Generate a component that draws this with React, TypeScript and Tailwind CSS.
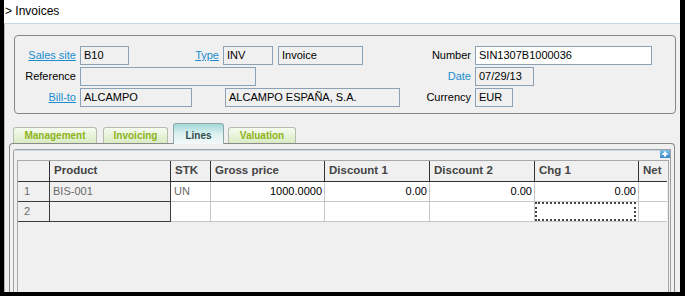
import React from "react";

const Input = ({ w, children, white }: { w: number; children?: React.ReactNode; white?: boolean }) => (
  <div
    className={`h-[19px] border border-[#8ba1b6] ${white ? "bg-white" : "bg-[#f0f0f0]"} pl-[3px] flex items-center text-[11px] text-black whitespace-nowrap overflow-hidden shrink-0`}
    style={{ width: w }}
  >
    {children}
  </div>
);

const Label = ({ w, children, kind }: { w: number; children: React.ReactNode; kind?: "link" | "blue" }) => (
  <div className="shrink-0 text-right pr-[4px] text-[11px] whitespace-nowrap" style={{ width: w }}>
    <span
      className={
        kind === "link"
          ? "text-[#1b8dcf] underline"
          : kind === "blue"
          ? "text-[#1b8dcf]"
          : "text-black"
      }
    >
      {children}
    </span>
  </div>
);

const cols = [32, 121, 40, 114, 105, 105, 104, 28];
const headers = ["", "Product", "STK", "Gross price", "Discount 1", "Discount 2", "Chg 1", "Net"];

function Cell({
  i,
  children,
  row,
}: {
  i: number;
  children?: React.ReactNode;
  row: number;
}) {
  const dark = i <= 1;
  const gray = i <= 1;
  const right = i >= 3;
  const focus = row === 2 && i === 6;
  return (
    <div
      className={`h-[20px] border-b border-r ${dark ? "border-[#3c3c3c]" : "border-[#c6c6c6]"} ${
        gray ? "bg-[#f0f0f0]" : "bg-white"
      } flex items-center text-[11px] ${i === 0 ? "justify-start pl-[6px] text-[#6a6a6a]" : right ? "justify-end pr-[2px] text-black" : "pl-[3px] text-[#6a6a6a]"} ${
        i === 7 ? "border-r-0" : ""
      }`}
      style={{ width: cols[i] }}
    >
      {focus ? <div className="w-full h-full border-2 border-dotted border-[#444]" /> : children}
    </div>
  );
}

export default function App() {
  const row1 = ["1", "BIS-001", "UN", "1000.0000", "0.00", "0.00", "0.00", ""];
  const row2 = ["2", "", "", "", "", "", "", ""];
  return (
    <div className="w-[685px] h-[296px] bg-black pl-[4px] pr-[5px] pb-[4px] flex flex-col font-['Liberation_Sans',Arial,sans-serif] text-[11px] text-black">
      <div className="h-[24px] shrink-0 bg-white border-b border-[#c9d5e1] flex items-center pl-[1px] pb-[2px] text-[12px]">
        &gt; Invoices
      </div>
      <div className="flex-1 min-h-0 bg-[#f0f0f0] flex flex-col border-l border-[#b4b4b4]">
        {/* Header group box */}
        <div className="mt-[11px] ml-[9px] mr-[4px] h-[79px] shrink-0 border border-[#858585] rounded-[4px] pt-[10px] flex flex-col gap-[2px]">
          <div className="flex items-center">
            <Label w={65} kind="link">Sales site</Label>
            <Input w={49}>B10</Input>
            <Label w={94} kind="link">Type</Label>
            <Input w={50}>INV</Input>
            <div className="w-[5px] shrink-0" />
            <Input w={85}>Invoice</Input>
            <Label w={112}>Number</Label>
            <Input w={177} white>SIN1307B1000036</Input>
          </div>
          <div className="flex items-center">
            <Label w={65}>Reference</Label>
            <Input w={176} />
            <Label w={219} kind="blue">Date</Label>
            <Input w={59}>07/29/13</Input>
          </div>
          <div className="flex items-center">
            <Label w={65} kind="link">Bill-to</Label>
            <Input w={112}>ALCAMPO</Input>
            <div className="w-[33px] shrink-0" />
            <Input w={175}>ALCAMPO ESPAÑA, S.A.</Input>
            <Label w={75}>Currency</Label>
            <Input w={38}>EUR</Input>
          </div>
        </div>

        {/* Tabs */}
        <div className="mt-[9px] ml-[8px] h-[20px] shrink-0 flex items-end relative z-10">
          <div className="w-[84px] h-[16px] border border-b-0 border-[#b3bcae] rounded-t-[3px] bg-gradient-to-b from-[#f6fbf0] to-[#d8ecc2] flex items-center justify-center text-[10px] font-bold text-[#8fb31c]">
            Management
          </div>
          <div className="w-[6px]" />
          <div className="w-[65px] h-[16px] border border-b-0 border-[#b3bcae] rounded-t-[3px] bg-gradient-to-b from-[#f6fbf0] to-[#d8ecc2] flex items-center justify-center text-[10px] font-bold text-[#8fb31c]">
            Invoicing
          </div>
          <div className="w-[5px]" />
          <div className="w-[51px] h-[21px] -mb-[1px] border border-b-0 border-[#8ea8a8] rounded-t-[3px] bg-gradient-to-b from-[#9fd8d6] via-[#dcf1f0] to-[#f4f9f9] flex items-center justify-center pt-[2px] text-[10px] font-bold text-[#2f4f4f]">
            Lines
          </div>
          <div className="w-[4px]" />
          <div className="w-[68px] h-[16px] border border-b-0 border-[#b3bcae] rounded-t-[3px] bg-gradient-to-b from-[#f6fbf0] to-[#d8ecc2] flex items-center justify-center text-[10px] font-bold text-[#8fb31c]">
            Valuation
          </div>
        </div>

        {/* Panel */}
        <div className="flex-1 min-h-0 ml-[4px] mr-[5px] border border-b-0 border-[#8a8a8a] rounded-t-[4px] pt-[5px] px-[3px] flex flex-col">
          <div className="flex-1 min-h-0 border border-b-0 border-[#a2a2a2] rounded-tl-[3px] flex flex-col">
            <div className="h-[10px] shrink-0 border-t border-[#c4d8e8] flex justify-end">
              <svg width="10" height="8" viewBox="0 0 10 8" className="-mt-[1px]">
                <defs>
                  <linearGradient id="pg" x1="0" y1="0" x2="0" y2="1">
                    <stop offset="0" stopColor="#7cc0ea" />
                    <stop offset="1" stopColor="#3d8cc8" />
                  </linearGradient>
                </defs>
                <rect x="0" y="0" width="10" height="8" fill="url(#pg)" />
                <rect x="4" y="1.5" width="2" height="5" fill="#fff" />
                <rect x="2.5" y="3" width="5" height="2" fill="#fff" />
              </svg>
            </div>
            <div className="flex-1 min-h-0 ml-[3px] mr-[1px] border-l border-r border-t border-[#a8a8a8] flex flex-col">
              <div className="flex h-[21px] shrink-0">
                {headers.map((h, i) => (
                  <div
                    key={i}
                    className={`h-[21px] bg-[#f0f0f0] border-b border-[#333] ${i === 7 ? "" : "border-r"} pl-[4px] flex items-center text-[11.5px] font-bold text-[#444]`}
                    style={{ width: cols[i] }}
                  >
                    {h}
                  </div>
                ))}
              </div>
              <div className="flex shrink-0">
                {row1.map((v, i) => (
                  <Cell key={i} i={i} row={1}>
                    {v}
                  </Cell>
                ))}
              </div>
              <div className="flex shrink-0">
                {row2.map((v, i) => (
                  <Cell key={i} i={i} row={2}>
                    {v}
                  </Cell>
                ))}
              </div>
            </div>
          </div>
        </div>
      </div>
    </div>
  );
}
